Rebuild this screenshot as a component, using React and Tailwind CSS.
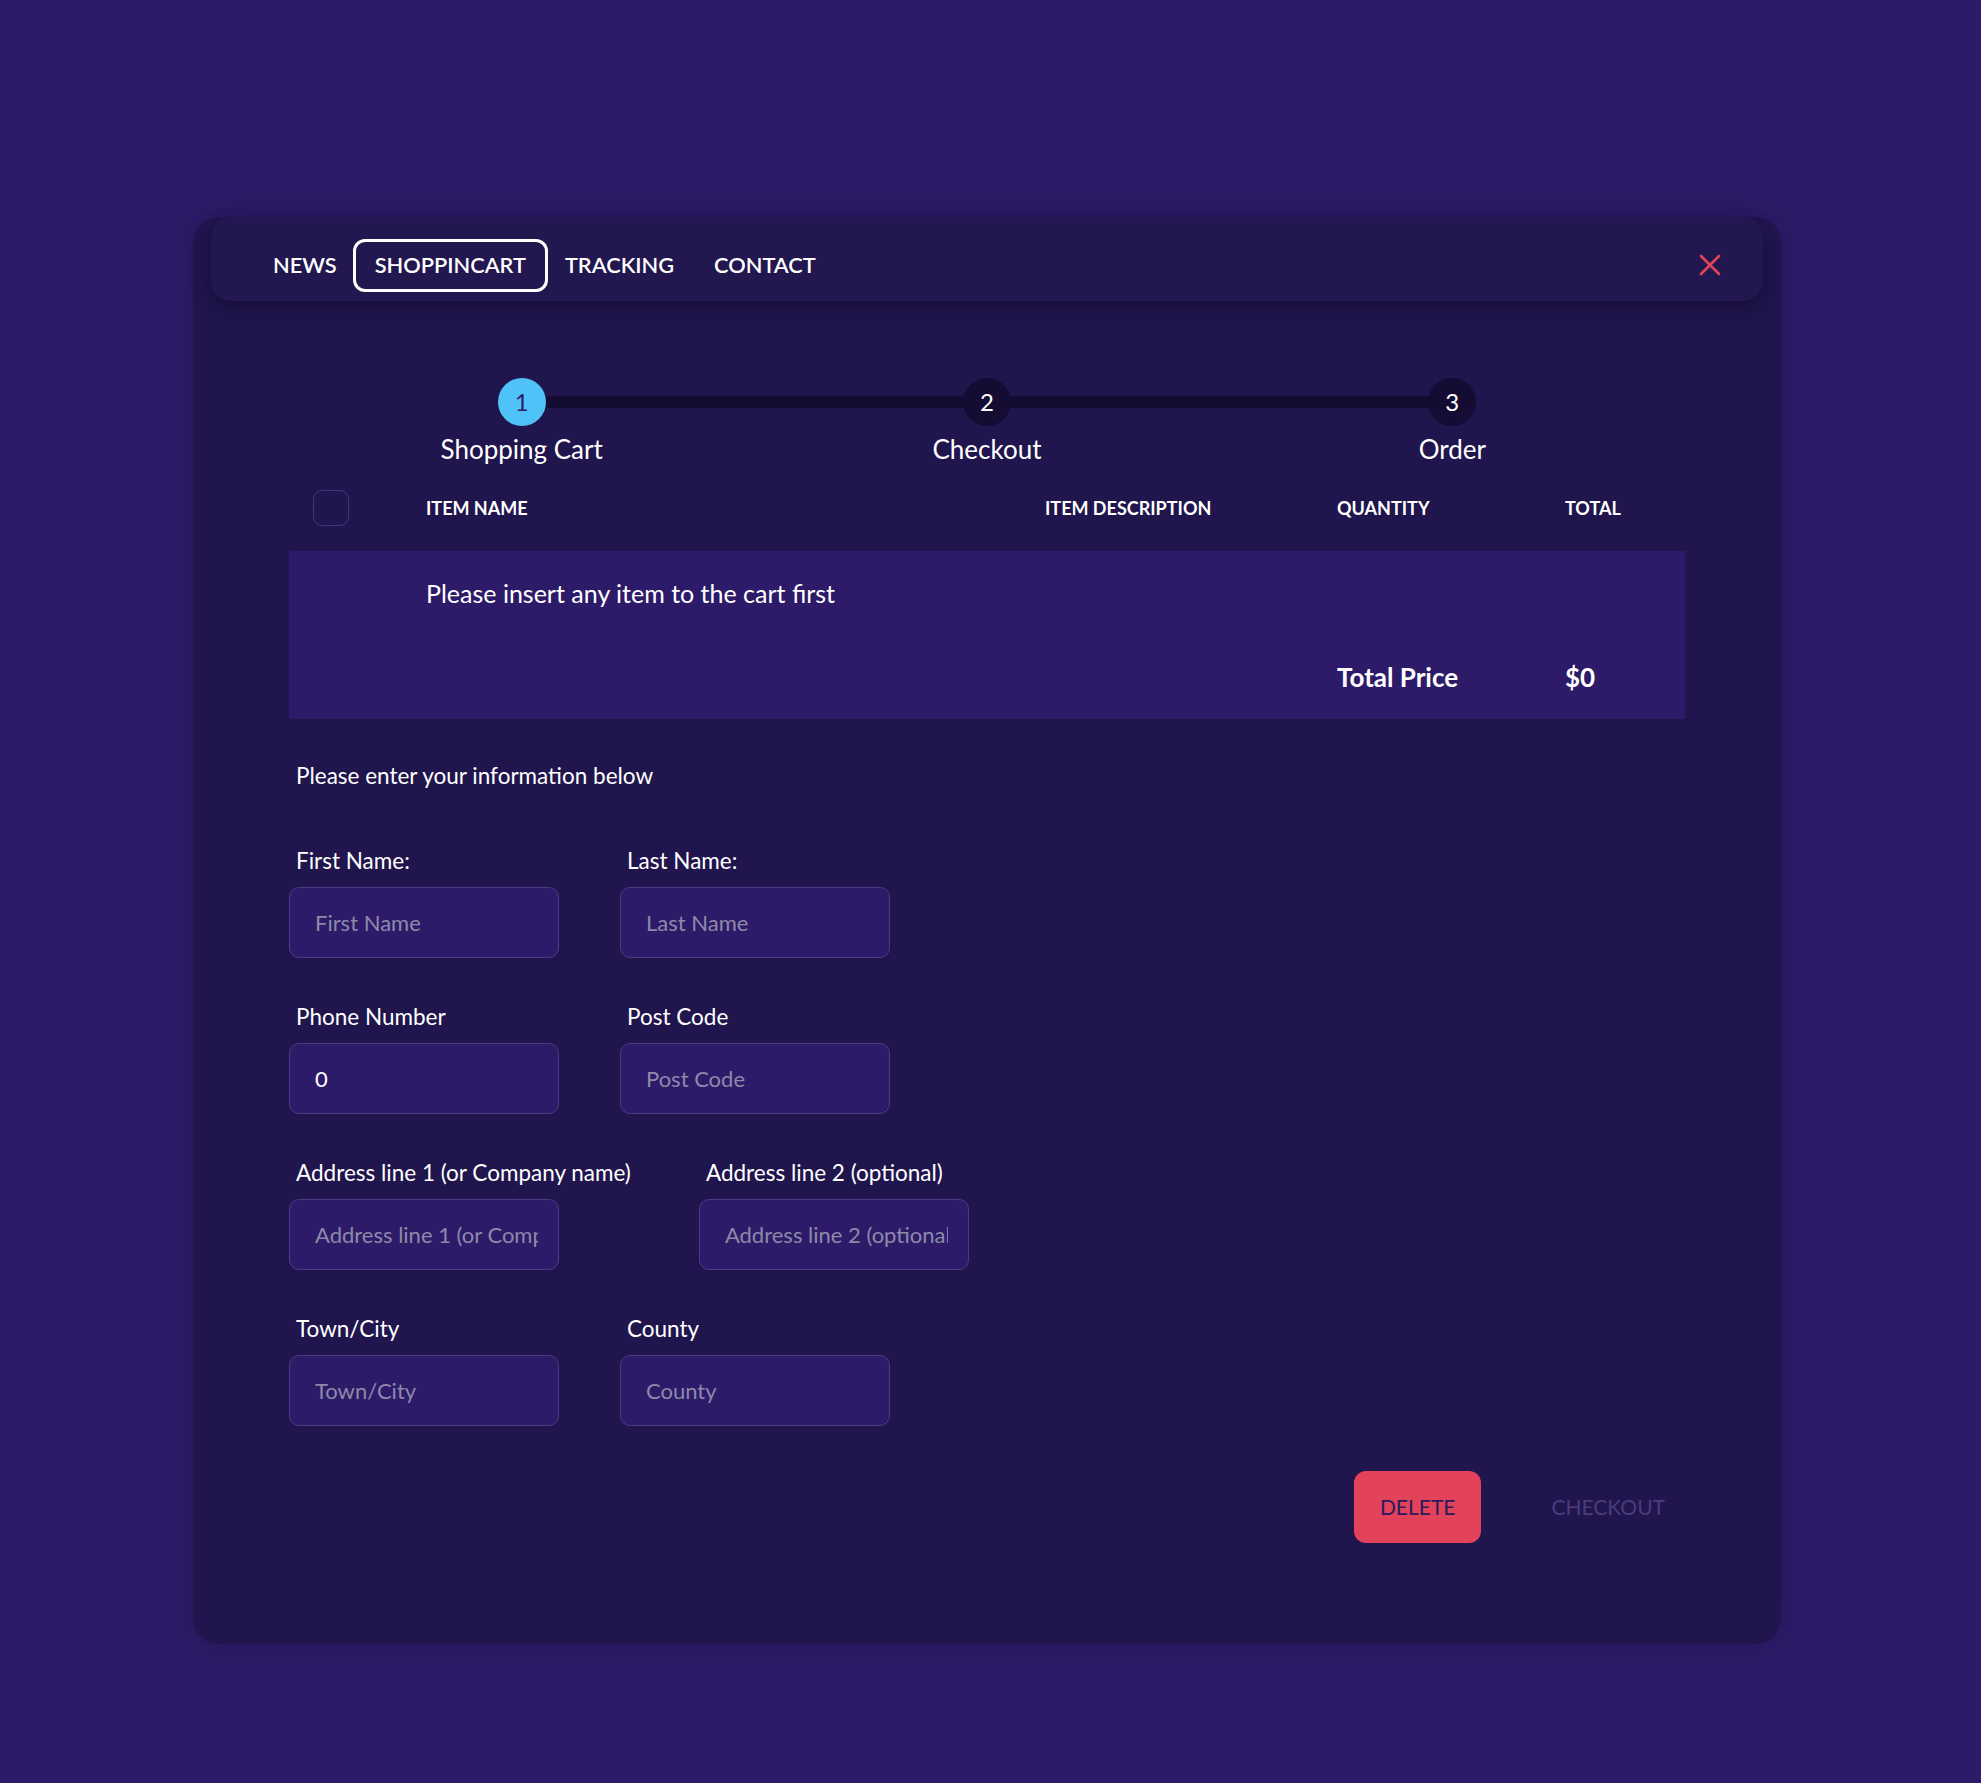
import React from 'react'

const steps = [
  { n: 1, label: 'Shopping Cart', active: true },
  { n: 2, label: 'Checkout' },
  { n: 3, label: 'Order' },
]

const rows = [
  [
    { label: 'First Name:', placeholder: 'First Name' },
    { label: 'Last Name:', placeholder: 'Last Name' },
  ],
  [
    { label: 'Phone Number', value: '0' },
    { label: 'Post Code', placeholder: 'Post Code' },
  ],
  [
    { label: 'Address line 1 (or Company name)', placeholder: 'Address line 1 (or Company name)' },
    { label: 'Address line 2 (optional)', placeholder: 'Address line 2 (optional)' },
  ],
  [
    { label: 'Town/City', placeholder: 'Town/City' },
    { label: 'County', placeholder: 'County' },
  ],
]

function Nav() {
  return (
    <header className="mx-[18px] mt-[12px] flex h-[84px] items-center rounded-[20px] bg-[#22174f] pl-[62px] pt-[12px] shadow-[0_8px_18px_rgba(10,4,30,0.35)]">
      <span className="text-[21.75px] font-semibold text-white">NEWS</span>
      <span className="ml-[16px] flex h-[53px] items-center rounded-[12px] border-[3px] border-white px-[19px] text-[21.75px] font-semibold text-white">
        SHOPPINCART
      </span>
      <span className="ml-[17px] text-[21.75px] font-semibold text-white">TRACKING</span>
      <span className="ml-[40px] text-[21.75px] font-semibold text-white">CONTACT</span>
      <button className="ml-auto mr-[42px] text-[#e2435a]">
        <svg width="22" height="22" viewBox="0 0 22 22" fill="none" stroke="currentColor" strokeWidth="2.6" strokeLinecap="round">
          <path d="M2 2L20 20M20 2L2 20" />
        </svg>
      </button>
    </header>
  )
}

function Stepper() {
  return (
    <div className="relative grid grid-cols-3">
      <div className="absolute left-[16.67%] right-[16.67%] top-[18px] h-[12px] bg-[#150c33]" />
      {steps.map((s) => (
        <div key={s.n} className="relative flex flex-col items-center">
          <div
            className={
              s.active
                ? 'flex h-[48px] w-[48px] items-center justify-center rounded-full bg-[#4fc3f7] text-[24px] text-[#2d1b69]'
                : 'flex h-[48px] w-[48px] items-center justify-center rounded-full bg-[#150c33] text-[24px] text-white'
            }
          >
            {s.n}
          </div>
          <div className="mt-[8px] text-[26px] leading-[31px] text-white">{s.label}</div>
        </div>
      ))}
    </div>
  )
}

function CartTable() {
  return (
    <div className="mt-[25px]">
      <div className="grid h-[36px] grid-cols-[137px_619px_292px_228px_1fr] items-center text-[18px] font-bold text-white">
        <div className="pl-[24px]">
          <div className="h-[36px] w-[36px] rounded-[9px] border border-[#42367a]" />
        </div>
        <div>ITEM NAME</div>
        <div>ITEM DESCRIPTION</div>
        <div>QUANTITY</div>
        <div>TOTAL</div>
      </div>
      <div className="mt-[25px] grid h-[168px] grid-cols-[137px_619px_292px_228px_1fr] content-start bg-[#2d1b69] text-white">
        <div />
        <div className="col-span-4 pt-[27px] text-[25px] leading-[30px]">Please insert any item to the cart first</div>
        <div className="col-span-3" />
        <div className="mt-[54px] text-[26px] font-bold leading-[30px]">Total Price</div>
        <div className="mt-[54px] text-[26px] font-bold leading-[30px]">$0</div>
      </div>
    </div>
  )
}

function Field({ label, placeholder, value }) {
  return (
    <div className="flex flex-col items-start">
      <label className="px-[7px] text-[22.5px] leading-[26px] text-white">{label}</label>
      <input
        className="mt-[13px] h-[71px] w-[270px] rounded-[10px] border border-[#4a3b84] bg-[#2d1b69] pl-[25px] pr-[20px] text-[22px] text-white outline-none placeholder:text-[#8d89a9]"
        placeholder={placeholder}
        defaultValue={value}
      />
    </div>
  )
}

export default function App() {
  return (
    <div className="min-h-[1783px] bg-[#2d1b69] pl-[193px] pt-[205px] font-['Lato',sans-serif]">
      <div className="w-[1588px] rounded-[26px] bg-[#20154d] pb-[101px] shadow-[0_0_30px_rgba(10,4,30,0.25)]">
        <Nav />
        <div className="mt-[77px] px-[96px]">
          <Stepper />
          <CartTable />
          <p className="mt-[43px] px-[7px] text-[22.5px] leading-[28px] text-white">Please enter your information below</p>
          <div className="mt-[58px] flex flex-col gap-[46px]">
            {rows.map((row, i) => (
              <div key={i} className="flex gap-[61px]">
                {row.map((f) => (
                  <Field key={f.label} {...f} />
                ))}
              </div>
            ))}
          </div>
          <div className="mt-[45px] flex justify-end gap-[50px]">
            <button className="h-[72px] rounded-[12px] bg-[#e2435a] px-[26px] text-[21px] text-[#2a1a5e]">DELETE</button>
            <button className="h-[72px] px-[20px] text-[21px] text-[#4a3d7a]">CHECKOUT</button>
          </div>
        </div>
      </div>
    </div>
  )
}
